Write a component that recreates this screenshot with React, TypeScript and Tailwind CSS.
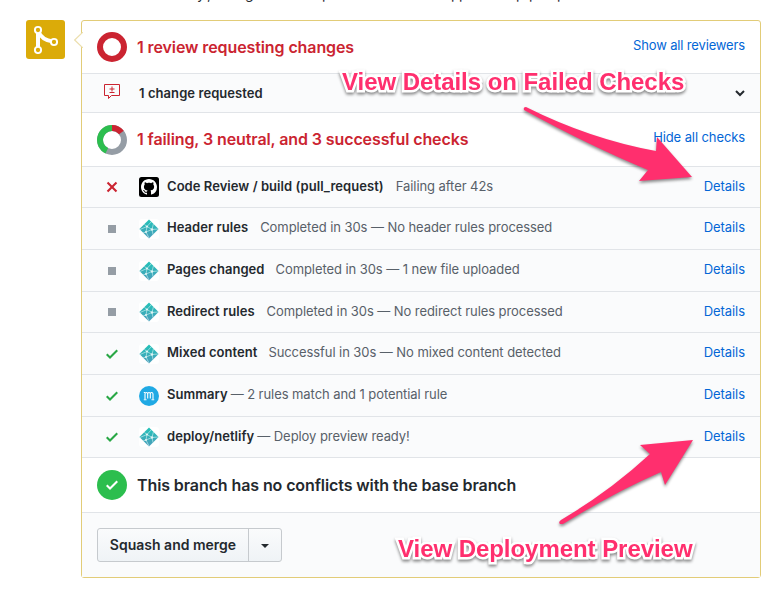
import React from "react";

const mark = "M8 0C3.58 0 0 3.58 0 8c0 3.54 2.29 6.53 5.47 7.59.4.07.55-.17.55-.38 0-.19-.01-.82-.01-1.49-2.01.37-2.53-.49-2.69-.94-.09-.23-.48-.94-.82-1.13-.28-.15-.68-.52-.01-.53.63-.01 1.08.58 1.23.82.72 1.21 1.87.87 2.33.66.07-.52.28-.87.51-1.07-1.78-.2-3.64-.89-3.64-3.95 0-.87.31-1.59.82-2.15-.08-.2-.36-1.02.08-2.12 0 0 .67-.21 2.2.82.64-.18 1.32-.27 2-.27.68 0 1.36.09 2 .27 1.53-1.04 2.2-.82 2.2-.82.44 1.1.16 1.92.08 2.12.51.56.82 1.27.82 2.15 0 3.07-1.87 3.75-3.65 3.95.29.25.54.73.54 1.48 0 1.07-.01 1.93-.01 2.2 0 .21.15.46.55.38A8.013 8.013 0 0016 8c0-4.42-3.58-8-8-8z";

function Github() {
  return (
    <svg width="20" height="20" viewBox="0 0 20 20">
      <rect width="20" height="20" rx="2.500" fill="#000" />
      <path transform="translate(2 2)" fill="#fff" d={mark} />
    </svg>
  );
}

function Netlify() {
  return (
    <svg width="20" height="20" viewBox="0 0 20 20">
      <defs>
        <linearGradient id="teal" x1="0" y1="0" x2="0" y2="1">
          <stop offset="0" stopColor="#22c3b8" />
          <stop offset="1" stopColor="#4a9dbb" />
        </linearGradient>
      </defs>
      <rect width="20" height="20" rx="3" fill="#fff" />
      <path d="M10 .4 19.6 10 10 19.6.4 10Z" fill="url(#teal)" />
      <g stroke="#d9f2f2" strokeWidth=".6" fill="none">
        <path d="M1 10.500 8 7.500l5 3 6-.5M5.400 5.400 8 7.500 7 13l-3 1M8 7.500l4.500-5M13 10.500l-6 2.500 3 6M13 10.500l1 5M13 10.500l1.500-6" />
      </g>
      <g fill="#e0f5f5">
        <circle cx="8" cy="7.500" r="1.100" />
        <circle cx="13" cy="10.500" r="1.200" />
        <circle cx="7" cy="13" r="1" />
      </g>
    </svg>
  );
}

function Mergify() {
  return (
    <svg width="20" height="20" viewBox="0 0 20 20">
      <circle cx="10" cy="10" r="10" fill="#1fa9e4" />
      <path d="M6 13V8q0-1.500 1.300-1.500T8.700 8v4.500M8.700 8q0-1.500 1.300-1.500T11.300 8v4.500M11.300 8q0-1.500 1.300-1.500T14 8v5M4.800 13.700h2.700M12.500 13.700h2.700M4.800 6.500H6" fill="none" stroke="#fff" strokeWidth="1.100" />
    </svg>
  );
}

function Tick({ color }: { color: string }) {
  return (
    <svg width="12" height="16" viewBox="0 0 12 16">
      <path fill={color} d="M12 5l-8 8-4-4 1.500-1.500L4 10l6.500-6.500z" />
    </svg>
  );
}

function Status({ kind }: { kind: string }) {
  if (kind === "fail")
    return (
      <svg width="12" height="16" viewBox="0 0 12 16">
        <path fill="#cb2431" d="M7.480 8l3.750 3.750-1.480 1.480L6 9.480l-3.750 3.750-1.480-1.480L4.520 8 .77 4.250l1.480-1.480L6 6.520l3.750-3.750 1.480 1.480z" />
      </svg>
    );
  if (kind === "neutral") return <span className="block h-2 w-2 bg-[#959da5]" />;
  return <Tick color="#28a745" />;
}

const rows = [
  { h: "h-[41px]", s: "fail", logo: <Github />, name: "Code Review / build (pull_request)", note: "Failing after 42s", gap: "ml-3", up: "" },
  { h: "h-[42px]", s: "neutral", logo: <Netlify />, name: "Header rules", note: "Completed in 30s — No header rules processed", gap: "ml-3", up: "pb-[2px]" },
  { h: "h-[42px]", s: "neutral", logo: <Netlify />, name: "Pages changed", note: "Completed in 30s — 1 new file uploaded", gap: "ml-[11px]", up: "pb-[2px]" },
  { h: "h-[41px]", s: "neutral", logo: <Netlify />, name: "Redirect rules", note: "Completed in 30s — No redirect rules processed", gap: "ml-3", up: "" },
  { h: "h-[42px]", s: "ok", logo: <Netlify />, name: "Mixed content", note: "Successful in 30s — No mixed content detected", gap: "ml-[11px]", up: "pb-[2px]" },
  { h: "h-[42px]", s: "ok", logo: <Mergify />, name: "Summary", note: "— 2 rules match and 1 potential rule", gap: "ml-[3px]", up: "pb-[2px]" },
  { h: "h-[41px]", s: "ok", logo: <Netlify />, name: "deploy/netlify", note: "— Deploy preview ready!", gap: "ml-[3px]", up: "" },
];

function Label({ text, className }: { text: string; className: string }) {
  return (
    <div className={`absolute whitespace-nowrap font-['Liberation_Sans',sans-serif] text-[24px] leading-7 font-bold tracking-[-0.05px] text-[#ff2f6e] [paint-order:stroke_fill] [-webkit-text-stroke:5px_#fff] [filter:drop-shadow(0_2px_1.5px_rgba(0,0,0,.45))] ${className}`}>
      {text}
    </div>
  );
}

export default function App() {
  return (
    <div className="relative h-[594px] w-[773px] overflow-hidden bg-white font-[Inter,sans-serif] text-[13px] text-[#24292e]">
      <div className="flex h-5 items-start pl-[197px] text-sm leading-[14px]">
        <div className="-mt-[13px] flex">
          <span className="w-[10px]">y</span>
          <span className="w-[38px]">,</span>
          <span className="w-[77px]">g</span>
          <span className="w-[129px]">p</span>
          <span className="w-2">p</span>
          <span className="w-[57px]">p</span>
          <span className="w-[13px]">p</span>
          <span className="w-7">p</span>
          <span>p</span>
        </div>
      </div>
      <div className="flex pl-[26px]">
        <div className="flex h-[39px] w-[39px] items-center justify-center rounded-[3px] bg-[#dbab09]">
          <svg width="25" height="29" viewBox="0 0 25 29" fill="none" stroke="#fff">
            <path d="M5 6v18M5 6q4 9.500 15 10.500" strokeWidth="4" />
            <g fill="#dbab09" strokeWidth="1.900">
              <circle cx="5" cy="5" r="3.100" />
              <circle cx="5" cy="25" r="3.100" />
              <circle cx="21" cy="17" r="3.100" />
            </g>
          </svg>
        </div>
        <div className="relative ml-4 h-[558px] w-[680px] rounded-[3px] border border-[#e2cc78] bg-white">
          <svg className="absolute top-[11px] -left-2" width="9" height="16" viewBox="0 0 9 16">
            <path d="M9 0 .7 8 9 16" fill="#fff" stroke="#ecdfae" strokeWidth="1.200" />
          </svg>
          <div className="flex h-[53px] items-center border-b border-[#e1e4e8] px-[15px]">
            <span className="h-[30px] w-[30px] rounded-full border-[6px] border-[#cb2431]" />
            <span className="ml-[10px] text-base font-semibold tracking-[-0.1px] text-[#cb2431]">1 review requesting changes</span>
            <span className="ml-auto -mt-[2px] tracking-[-0.15px] text-[#0366d6]">Show all reviewers</span>
          </div>
          <div className="flex h-[39px] items-center border-b border-[#e1e4e8] bg-[#fafbfc] px-[15px]">
            <svg className="-mt-[2px] ml-[7px]" width="16" height="16" viewBox="0 0 16 16" fill="none" stroke="#cb2431">
              <path d="M.5.5h15v11H7.500L4.500 14.500v-3h-4zM8 2.500v5M5.500 5h5M5.500 8.500h5" />
            </svg>
            <span className="ml-[19px] pt-[2px] font-semibold tracking-[0.07px]">1 change requested</span>
            <svg className="ml-auto" width="10" height="7" viewBox="0 0 10 7">
              <path d="M1 1l4 4 4-4" fill="none" stroke="#24292e" strokeWidth="2" />
            </svg>
          </div>
          <div className="flex h-[54px] items-center border-b border-[#e1e4e8] px-[15px]">
            <svg width="30" height="30" viewBox="0 0 30 30" fill="none" strokeWidth="6">
              <circle cx="15" cy="15" r="12" stroke="#959da5" />
              <path d="M15 3A12 12 0 0 1 24.400 7.500" stroke="#cb2431" />
              <path d="M9.800 25.800A12 12 0 0 1 15 3" stroke="#2cbe4e" />
            </svg>
            <span className="ml-[10px] pb-[2px] text-base font-semibold tracking-[-0.1px] text-[#cb2431]">1 failing, 3 neutral, and 3 successful checks</span>
            <span className="ml-auto -mt-1 tracking-[-0.1px] text-[#0366d6]">Hide all checks</span>
          </div>
          {rows.map((r) => (
            <div key={r.name} className={`flex items-center border-b border-[#e1e4e8] bg-[#fafbfc] px-[15px] ${r.h}`}>
              <span className="flex w-[30px] justify-center"><Status kind={r.s} /></span>
              <span className="ml-3">{r.logo}</span>
              <span className={`ml-2 font-semibold tracking-[0.05px] ${r.up}`}>{r.name}</span>
              <span className={`tracking-[-0.07px] text-[#586069] ${r.gap} ${r.up}`}>{r.note}</span>
              <span className={`ml-auto tracking-[-0.06px] text-[#0366d6] ${r.up}`}>Details</span>
            </div>
          ))}
          <div className="flex h-[55px] items-center border-b border-[#e1e4e8] px-[15px]">
            <span className="-mt-px flex h-[30px] w-[30px] items-center justify-center rounded-full bg-[#2cbe4e]"><Tick color="#fff" /></span>
            <span className="ml-[10px] text-base font-semibold tracking-[-0.1px]">This branch has no conflicts with the base branch</span>
          </div>
          <div className="flex h-16 items-center bg-[#fafbfc] px-[15px]">
            <div className="flex h-[34px] w-[185px] rounded-[3px] border border-[#c6cace] bg-linear-to-b from-[#fafbfc] to-[#eff3f6]">
              <span className="flex w-[151px] items-center justify-center border-r border-[#c6cace] text-sm font-semibold">Squash and merge</span>
              <span className="flex flex-1 items-center justify-center pt-px">
                <svg width="8" height="4" viewBox="0 0 8 4"><path d="M0 0h8L4 4z" fill="#24292e" /></svg>
              </span>
            </div>
          </div>
        </div>
      </div>
      <svg className="absolute top-0 left-0 [filter:drop-shadow(0_2px_1.5px_rgba(0,0,0,.45))]" width="773" height="594" viewBox="0 0 773 594" fill="#ff2f6e">
        <path d="M526 107Q590 139 656 151L657 137 692 177 639 181 648 170Q590 146 524 110Q523 107 526 107Z" />
        <path d="M560 524Q558 522 561 520Q610 491 650 454L640 445 693 440 665 485 661 472Q615 492 563 524Z" />
      </svg>
      <Label text="View Details on Failed Checks" className="top-[68px] left-[342px]" />
      <Label text="View Deployment Preview" className="top-[535px] left-[398px]" />
    </div>
  );
}
